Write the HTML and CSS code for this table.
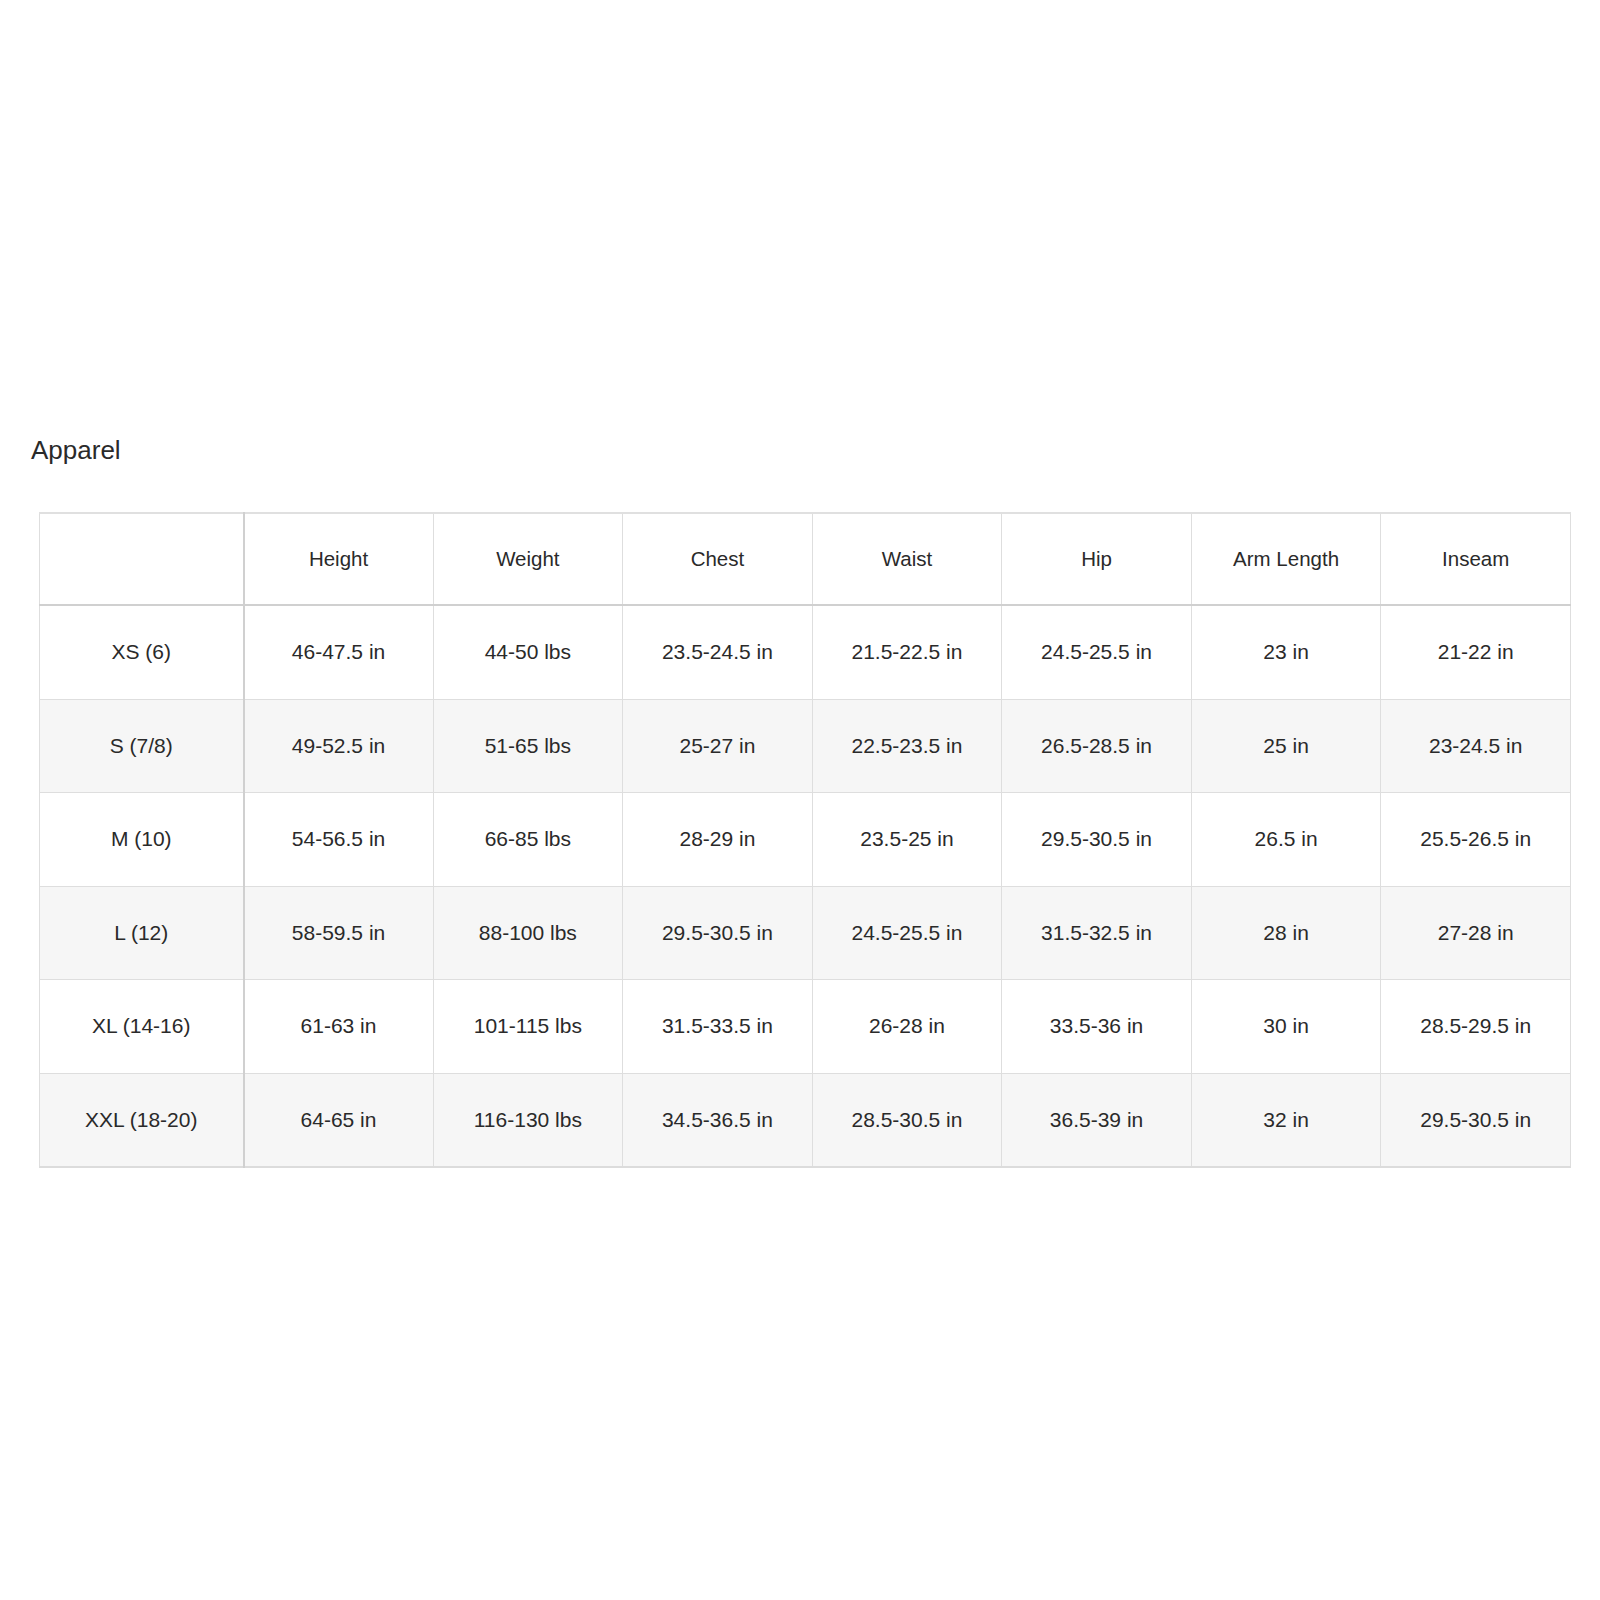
FILE: index.html
```html
<!DOCTYPE html>
<html>
<head>
<meta charset="utf-8">
<link rel="stylesheet" href="styles.css">
</head>
<body>
<div class="page">
  <h2 class="title">Apparel</h2>
  <table class="sizes">
    <colgroup>
      <col class="col-size">
      <col span="7">
    </colgroup>
    <thead>
      <tr>
        <th class="corner"></th>
        <th>Height</th>
        <th>Weight</th>
        <th>Chest</th>
        <th>Waist</th>
        <th>Hip</th>
        <th>Arm Length</th>
        <th>Inseam</th>
      </tr>
    </thead>
    <tbody>
      <tr>
        <td class="size">XS (6)</td><td>46-47.5 in</td><td>44-50 lbs</td><td>23.5-24.5 in</td><td>21.5-22.5 in</td><td>24.5-25.5 in</td><td>23 in</td><td>21-22 in</td>
      </tr>
      <tr class="alt">
        <td class="size">S (7/8)</td><td>49-52.5 in</td><td>51-65 lbs</td><td>25-27 in</td><td>22.5-23.5 in</td><td>26.5-28.5 in</td><td>25 in</td><td>23-24.5 in</td>
      </tr>
      <tr>
        <td class="size">M (10)</td><td>54-56.5 in</td><td>66-85 lbs</td><td>28-29 in</td><td>23.5-25 in</td><td>29.5-30.5 in</td><td>26.5 in</td><td>25.5-26.5 in</td>
      </tr>
      <tr class="alt">
        <td class="size">L (12)</td><td>58-59.5 in</td><td>88-100 lbs</td><td>29.5-30.5 in</td><td>24.5-25.5 in</td><td>31.5-32.5 in</td><td>28 in</td><td>27-28 in</td>
      </tr>
      <tr>
        <td class="size">XL (14-16)</td><td>61-63 in</td><td>101-115 lbs</td><td>31.5-33.5 in</td><td>26-28 in</td><td>33.5-36 in</td><td>30 in</td><td>28.5-29.5 in</td>
      </tr>
      <tr class="alt">
        <td class="size">XXL (18-20)</td><td>64-65 in</td><td>116-130 lbs</td><td>34.5-36.5 in</td><td>28.5-30.5 in</td><td>36.5-39 in</td><td>32 in</td><td>29.5-30.5 in</td>
      </tr>
    </tbody>
  </table>
</div>
</body>
</html>
```
FILE: styles.css
```css
html, body {
  margin: 0;
  padding: 0;
  background: #ffffff;
}

.page {
  padding: 435px 0 0 31px;
  font-family: "Liberation Sans", Arial, sans-serif;
  color: #2a2a2a;
}

.title {
  margin: 0 0 47px 0;
  font-size: 26px;
  line-height: 30px;
  font-weight: normal;
  color: #2a2a2a;
}

.sizes {
  margin-left: 8px;
  width: 1532px;
  table-layout: fixed;
  border-collapse: collapse;
  border: 1px solid #dcdcdc;
  border-top: 2px solid #e0e0e0;
  border-bottom: 2px solid #dcdcdc;
}

.col-size {
  width: 204px;
}

.sizes th,
.sizes td {
  padding: 0;
  text-align: center;
  vertical-align: middle;
  font-weight: normal;
  color: #2a2a2a;
  border: 1px solid #dedede;
}

.sizes th {
  height: 90px;
  font-size: 20.5px;
  border-bottom: 2px solid #d0d0d0;
}

.sizes td {
  height: 92.5px;
  font-size: 21px;
}

.sizes .size,
.sizes .corner {
  border-right: 2px solid #d0d0d0;
}

.sizes tr.alt td {
  background: #f6f6f6;
}
```
